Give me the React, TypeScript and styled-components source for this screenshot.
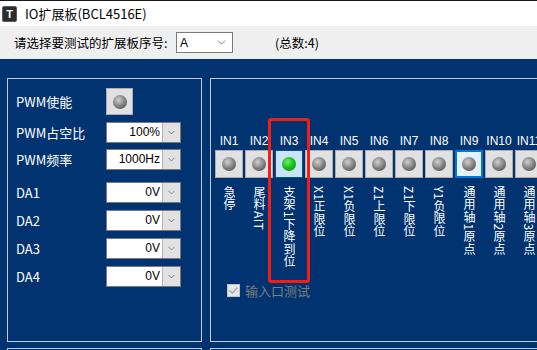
import styled, { createGlobalStyle } from "styled-components";
import { ChevronDown } from "lucide-react";

const GlobalStyle = createGlobalStyle`
  html, body {
    margin: 0;
    padding: 0;
    overflow: hidden;
    background: #003370;
  }
  body {
    font-family: "Noto Sans CJK SC", "Liberation Sans", sans-serif;
  }
`;

const inputs = [
  { name: "IN1", label: "急停" },
  { name: "IN2", label: "尾料AIT" },
  { name: "IN3", label: "支架1下降到位", state: "on" },
  { name: "IN4", label: "X1正限位" },
  { name: "IN5", label: "X1负限位" },
  { name: "IN6", label: "Z1上限位" },
  { name: "IN7", label: "Z1下限位" },
  { name: "IN8", label: "Y1负限位" },
  { name: "IN9", label: "通用轴1原点", state: "focus" },
  { name: "IN10", label: "通用轴2原点" },
  { name: "IN11", label: "通用轴3原点" },
];

const settings = [
  { label: "PWM占空比", value: "100%", space: 7 },
  { label: "PWM频率", value: "1000Hz", space: 6 },
  { label: "DA1", value: "0V", space: 12 },
  { label: "DA2", value: "0V", space: 7 },
  { label: "DA3", value: "0V", space: 7 },
  { label: "DA4", value: "0V", space: 7 },
];

const App = () => {
  return (
    <Window>
      <GlobalStyle />
      <TitleBar>
        <AppIcon>T</AppIcon>
        <Title>IO扩展板(BCL4516E)</Title>
      </TitleBar>
      <Toolbar>
        <ToolLabel>请选择要测试的扩展板序号:</ToolLabel>
        <BoardSelect>
          <span>A</span>
          <ChevronDown size={13} strokeWidth={1.4} color="#555" />
        </BoardSelect>
        <Count>(总数:4)</Count>
      </Toolbar>

      <Main>
        <Column>
          <Panel $width={195}>
            <SettingRow $space={9}>
              <RowLabel>PWM使能</RowLabel>
              <LedButton $size={27}>
                <Led />
              </LedButton>
            </SettingRow>
            {settings.map((s) => (
              <SettingRow key={s.label} $space={s.space}>
                <RowLabel>{s.label}</RowLabel>
                <Combo>
                  <ComboValue>{s.value}</ComboValue>
                  <ComboButton>
                    <ChevronDown size={11} strokeWidth={1.4} color="#555" />
                  </ComboButton>
                </Combo>
              </SettingRow>
            ))}
          </Panel>
          <Panel $width={195} />
        </Column>

        <Column>
          <Panel $width={400}>
            <IoRow>
              {inputs.map((io) => (
                <IoColumn key={io.name}>
                  <IoName>{io.name}</IoName>
                  <LedButton $size={28} $state={io.state}>
                    <Led $on={io.state === "on"} />
                  </LedButton>
                  <IoLabel>{io.label}</IoLabel>
                </IoColumn>
              ))}
            </IoRow>
            <CheckRow>
              <CheckBox>
                <svg width="11" height="11" viewBox="0 0 11 11">
                  <path
                    d="M1.5 5.5 L4.2 8.2 L9.5 2.5"
                    fill="none"
                    stroke="#a8a8a8"
                    strokeWidth="1.6"
                  />
                </svg>
              </CheckBox>
              <CheckText>输入口测试</CheckText>
            </CheckRow>
          </Panel>
          <Panel $width={400} />
        </Column>
      </Main>

      <Highlight />
    </Window>
  );
};

const Window = styled.div`
  position: relative;
  width: 537px;
  height: 350px;
  overflow: hidden;
  background: #003370;
`;

const TitleBar = styled.div`
  height: 26px;
  box-sizing: border-box;
  border-top: 1px solid #1a1a1a;
  background: #ffffff;
  display: flex;
  align-items: center;
  padding-left: 2px;
  gap: 8px;
`;

const AppIcon = styled.div`
  width: 13px;
  height: 14px;
  background: #2d2d2d;
  border: 1px solid #5a5a5a;
  border-radius: 2px;
  color: #ffffff;
  font: bold 11px "Liberation Sans", sans-serif;
  display: flex;
  align-items: center;
  justify-content: center;
`;

const Title = styled.div`
  font-size: 13px;
  color: #000;
  line-height: 1;
`;

const Toolbar = styled.div`
  height: 33px;
  background: #efefef;
  display: flex;
  align-items: center;
  padding-left: 14px;
  font-size: 12.5px;
  color: #000;
`;

const ToolLabel = styled.span`
  width: 162px;
`;

const BoardSelect = styled.div`
  width: 57px;
  height: 21px;
  box-sizing: border-box;
  border: 1px solid #7a7a7a;
  background: #fff;
  display: flex;
  align-items: center;
  justify-content: space-between;
  padding: 0 4px 0 3px;
  font: 12px "Liberation Sans", sans-serif;
`;

const Count = styled.span`
  margin-left: 42px;
`;

const Main = styled.div`
  display: flex;
  gap: 8px;
  padding: 19px 0 0 7px;
`;

const Column = styled.div`
  display: flex;
  flex-direction: column;
  gap: 6px;
`;

const Panel = styled.div<{ $width: number }>`
  width: ${(p) => p.$width}px;
  height: 264px;
  box-sizing: border-box;
  border: 1px solid #c3c8d2;
  flex-shrink: 0;
`;

const SettingRow = styled.div<{ $space: number }>`
  display: flex;
  align-items: center;
  margin-top: ${(p) => p.$space}px;
  padding-left: 8px;
`;

const RowLabel = styled.span`
  width: 90px;
  color: #ffffff;
  font-size: 13px;
  line-height: 1;
`;

const LedButton = styled.div<{ $size: number; $state?: string }>`
  width: ${(p) => p.$size}px;
  height: ${(p) => p.$size}px;
  box-sizing: border-box;
  display: flex;
  align-items: center;
  justify-content: center;
  background: ${(p) =>
    p.$state === "on" ? "#cce4f7" : p.$state === "focus" ? "#e5f1fb" : "#e1e1e1"};
  border: 1px solid
    ${(p) =>
      p.$state === "on" ? "#005499" : p.$state === "focus" ? "#0078d7" : "#adadad"};
  box-shadow: ${(p) => (p.$state === "focus" ? "inset 0 0 0 1px #0078d7" : "none")};
`;

const Led = styled.div<{ $on?: boolean }>`
  width: 14px;
  height: 14px;
  border-radius: 50%;
  background: ${(p) =>
    p.$on
      ? "radial-gradient(circle at 40% 35%, #6ff06f 0%, #1cc21c 45%, #078a07 100%)"
      : "radial-gradient(circle at 40% 35%, #d0d0d0 0%, #8a8a8a 45%, #3e3e3e 100%)"};
`;

const Combo = styled.div`
  width: 75px;
  height: 21px;
  box-sizing: border-box;
  border: 1px solid #7a7a7a;
  background: #fff;
  display: flex;
`;

const ComboValue = styled.div`
  flex: 1;
  text-align: right;
  padding-right: 2px;
  font: 12px "Liberation Sans", sans-serif;
  line-height: 19px;
  color: #000;
`;

const ComboButton = styled.div`
  width: 17px;
  background: #e1e1e1;
  border-left: 1px solid #b4b4b4;
  display: flex;
  align-items: center;
  justify-content: center;
`;

const IoRow = styled.div`
  display: flex;
  gap: 2px;
  padding: 55px 0 0 4px;
  height: 142px;
`;

const IoColumn = styled.div`
  width: 28px;
  flex-shrink: 0;
  display: flex;
  flex-direction: column;
  align-items: center;
`;

const IoName = styled.div`
  color: #ffffff;
  font: 12px "Liberation Sans", sans-serif;
  line-height: 14px;
  margin-bottom: 2px;
  white-space: nowrap;
`;

const IoLabel = styled.div`
  writing-mode: vertical-rl;
  color: #ffffff;
  font-size: 12px;
  line-height: 14px;
  letter-spacing: 0.5px;
  margin-top: 8px;
`;

const CheckRow = styled.div`
  display: flex;
  align-items: center;
  gap: 5px;
  margin-top: 8px;
  padding-left: 16px;
`;

const CheckBox = styled.div`
  width: 13px;
  height: 13px;
  box-sizing: border-box;
  background: #e6e6e6;
  border: 1px solid #c4c4c4;
  display: flex;
  align-items: center;
  justify-content: center;
`;

const CheckText = styled.span`
  color: #7d7d7d;
  font-size: 13px;
  line-height: 1;
`;

const Highlight = styled.div`
  position: absolute;
  left: 268px;
  top: 118px;
  width: 42px;
  height: 165px;
  box-sizing: border-box;
  border: 3px solid #f21d16;
  border-radius: 3px;
  pointer-events: none;
`;

export default App;
